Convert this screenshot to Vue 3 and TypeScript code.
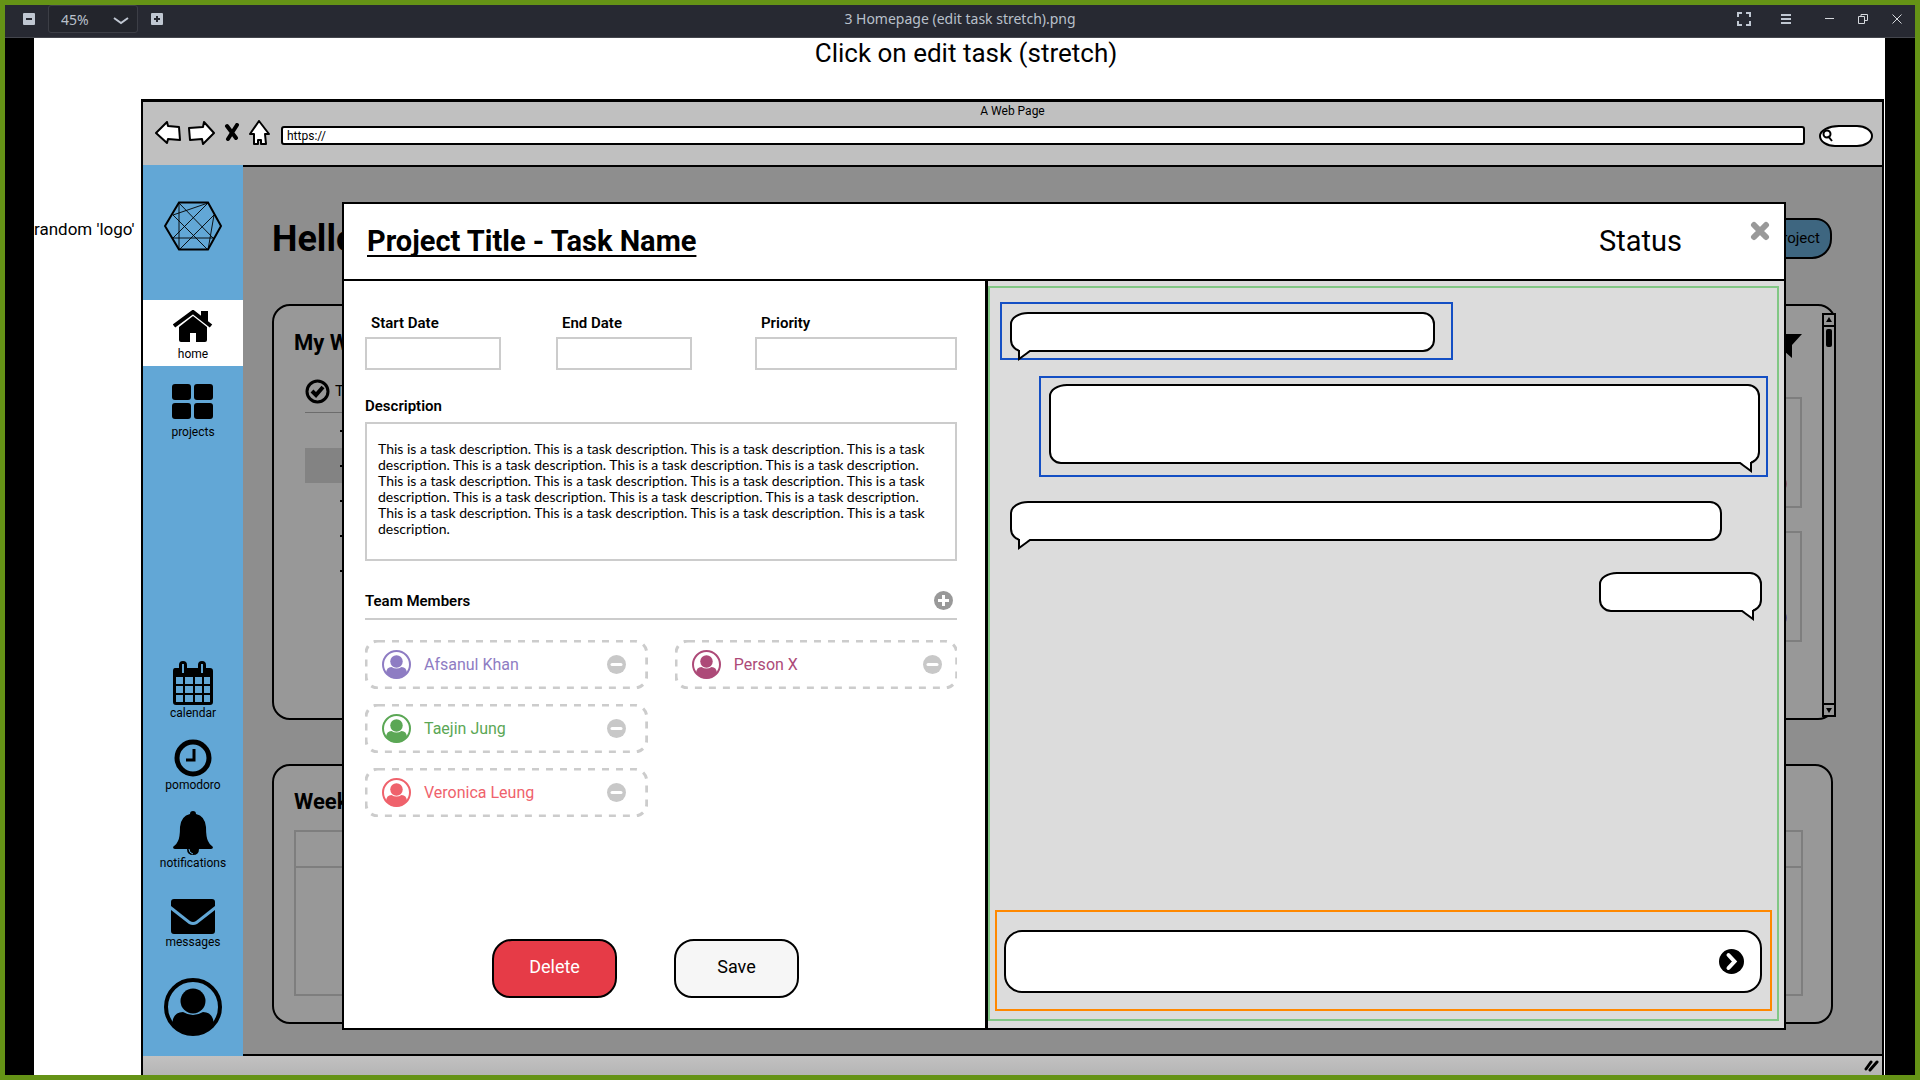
<script setup lang="ts">
import { ref } from 'vue'

interface Member {
  name: string
  color: string
}

interface Message {
  side: 'left' | 'right'
  size: 'medium' | 'large' | 'wide' | 'small'
  outlined: boolean
}

const sentence = 'This is a task description.'
const description = ref(Array(18).fill(sentence).join(' '))
const address = ref('https://')
const draft = ref('')
const search = ref('')
const zoomLevel = ref('45%')

const memberColumns: Member[][] = [
  [
    { name: 'Afsanul Khan', color: '#8e7cc3' },
    { name: 'Taejin Jung', color: '#5ba755' },
    { name: 'Veronica Leung', color: '#ef626c' },
  ],
  [{ name: 'Person X', color: '#ad4a78' }],
]

const messages: Message[] = [
  { side: 'left', size: 'medium', outlined: true },
  { side: 'right', size: 'large', outlined: true },
  { side: 'left', size: 'wide', outlined: false },
  { side: 'right', size: 'small', outlined: false },
]
</script>

<template>
  <div class="viewer">
    <header class="titlebar">
      <div class="zoom">
        <button type="button" class="tool" aria-label="Zoom out">
          <svg width="12" height="12" viewBox="0 0 12 12"><rect width="12" height="12" rx="1" fill="#c0c7d2" /><path d="M3 6h6" stroke="#272932" stroke-width="2" /></svg>
        </button>
        <div class="zoom-select">
          <select v-model="zoomLevel" aria-label="Zoom level"><option>45%</option></select>
          <svg class="chevron" width="16" height="8" viewBox="0 0 16 8" fill="none" stroke="#c0c7d2" stroke-width="2"><path d="M1 1l7 5 7-5" /></svg>
        </div>
        <button type="button" class="tool" aria-label="Zoom in">
          <svg width="12" height="12" viewBox="0 0 12 12"><rect width="12" height="12" rx="1" fill="#c0c7d2" /><path d="M3 6h6M6 3v6" stroke="#272932" stroke-width="2" /></svg>
        </button>
      </div>
      <span class="filename">3 Homepage (edit task stretch).png</span>
      <div class="window-tools">
        <button type="button" class="tool full" aria-label="Fullscreen">
          <svg width="14" height="14" viewBox="0 0 14 14" fill="none" stroke="#c0c7d2" stroke-width="2"><path d="M5 1H1v4M9 1h4v4M1 9v4h4M13 9v4H9" /></svg>
        </button>
        <button type="button" class="tool menu" aria-label="Menu">
          <svg width="10" height="10" viewBox="0 0 10 10" stroke="#c0c7d2" stroke-width="2"><path d="M0 1h10M0 5h10M0 9h10" /></svg>
        </button>
        <button type="button" class="tool" aria-label="Minimize">
          <svg width="9" height="10" viewBox="0 0 9 10" stroke="#d5d8dd"><path d="M0 4.5h9" /></svg>
        </button>
        <button type="button" class="tool" aria-label="Restore">
          <svg width="10" height="10" viewBox="0 0 10 10" fill="none" stroke="#d5d8dd"><path d="M.5 2.500h6v7h-6zM3 2.500V.5h6.500v6H7" /></svg>
        </button>
        <button type="button" class="tool" aria-label="Close">
          <svg width="10" height="10" viewBox="0 0 10 10" stroke="#d5d8dd"><path d="M.5.5l9 9M9.500.5l-9 9" /></svg>
        </button>
      </div>
    </header>

    <div class="stage">
      <div class="canvas">
        <h1 class="caption">Click on edit task (stretch)</h1>
        <div class="board">
          <p class="note">random 'logo'</p>

          <div class="browser">
            <div class="chrome">
              <div class="page-title">A Web Page</div>
              <div class="toolbar">
                <button type="button" class="nav-btn" aria-label="Back">
                  <svg width="26" height="24" viewBox="0 0 26 24" fill="#fff" stroke="#000" stroke-width="2" stroke-linejoin="round"><path d="M1 12L12 1l1 4 11 1 1 13-12-1-1 4z" /></svg>
                </button>
                <button type="button" class="nav-btn" aria-label="Forward">
                  <svg width="27" height="24" viewBox="0 0 27 24" fill="#fff" stroke="#000" stroke-width="2" stroke-linejoin="round"><path d="M26 12L16 1l-1 5-14 1 1 12 12-1 1 5z" /></svg>
                </button>
                <button type="button" class="nav-btn stop" aria-label="Stop">
                  <svg width="16" height="20" viewBox="0 0 16 20" stroke="#000" stroke-width="4" stroke-linecap="round"><path d="M3 3l9 12M13 2L4 16" /></svg>
                </button>
                <button type="button" class="nav-btn" aria-label="Home">
                  <svg width="21" height="25" viewBox="0 0 21 25" fill="#fff" stroke="#000" stroke-width="2" stroke-linejoin="round"><path d="M10 1L1 14h4v10h4v-4h3v4h5l-1-10h4z" /></svg>
                </button>
                <input v-model="address" class="url" type="text" aria-label="Address">
                <div class="search">
                  <svg width="11" height="13" viewBox="0 0 11 13" fill="none" stroke="#000" stroke-width="2"><circle cx="5" cy="5" r="3.500" /><path d="M6 7l4 5" /></svg>
                  <input v-model="search" type="text" aria-label="Search">
                </div>
              </div>
            </div>

            <div class="page">
              <nav class="sidebar">
                <a href="#" class="logo" aria-label="Logo">
                  <svg width="58" height="50" viewBox="0 0 58 50" fill="none" stroke="#000">
                    <path d="M15 1.500h29L57 25 44 48.500H15L1 25z" stroke-width="2" />
                    <path d="M15 1v48M15 2l35 36M44 2L9 14M44 2L9 37M9 14l35 35M50 14L15 49M50 14l-6 35M9 37h41" stroke-width=".9" />
                  </svg>
                </a>
                <a href="#" class="item active">
                  <svg width="40" height="32" viewBox="0 0 40 32"><path d="M1 16L20 2l18 14" fill="none" stroke="#000" stroke-width="4" /><path d="M28 1h7v11l-7-5zM6 17L20 6l14 11v13q0 2-2 2h-9v-9h-6v9H8q-2 0-2-2z" /></svg>
                  <span>home</span>
                </a>
                <a href="#" class="item projects">
                  <svg width="42" height="36" viewBox="0 0 42 36"><rect width="19" height="16" rx="3" /><rect x="22" width="19" height="16" rx="3" /><rect y="19" width="19" height="16" rx="3" /><rect x="22" y="19" width="19" height="16" rx="3" /></svg>
                  <span>projects</span>
                </a>
                <div class="spacer" />
                <a href="#" class="item">
                  <svg width="42" height="44" viewBox="0 0 42 44">
                    <path d="M3 7h4V4q0-4 4-4t4 4v3h11V4q0-4 4-4t4 4v3h4q3 0 3 3v31q0 3-3 3H4q-3 0-3-3V10q0-3 2-3z" />
                    <path d="M10 3h2v9h-2zM29 3h2v9h-2zM4 16h7v7H4zM13 16h8v7h-8zM23 16h7v7h-7zM32 16h6v7h-6zM4 25h7v7H4zM13 25h8v7h-8zM23 25h7v7h-7zM32 25h6v7h-6zM4 34h7v7H4zM13 34h8v7h-8zM23 34h7v7h-7zM32 34h6v7h-6z" fill="#62a7d6" />
                  </svg>
                  <span>calendar</span>
                </a>
                <a href="#" class="item">
                  <svg width="38" height="38" viewBox="0 0 38 38" fill="none" stroke="#000"><circle cx="19" cy="19" r="16" stroke-width="5" /><path d="M20 10v11h-8" stroke-width="3" /></svg>
                  <span>pomodoro</span>
                </a>
                <a href="#" class="item">
                  <svg width="42" height="44" viewBox="0 0 42 44"><path d="M21 0q3 0 3 3 9 2 10 13 0 10 2 14 1 3 5 6 0 2-2 2H27q0 6-6 6t-6-6H3q-2 0-2-2 4-3 5-6 2-4 2-14Q9 5 18 3q0-3 3-3z" /><path d="M17 38q0 4 4 5" fill="none" stroke="#62a7d6" /></svg>
                  <span>notifications</span>
                </a>
                <a href="#" class="item loose">
                  <svg width="44" height="35" viewBox="0 0 44 35"><path d="M3 0h38q3 0 3 3v4L25 22q-3 2-6 0L0 7V3q0-3 3-3z" /><path d="M0 11l18 14q4 2 8 0l18-14v21q0 3-3 3H3q-3 0-3-3z" /></svg>
                  <span>messages</span>
                </a>
                <a href="#" class="item loose" aria-label="Profile">
                  <svg width="58" height="58" viewBox="0 0 58 58"><circle cx="29" cy="29" r="27" fill="none" stroke="#000" stroke-width="4" /><ellipse cx="29" cy="23" rx="12.500" ry="12.500" /><path d="M8 46q1-12 11-12 10 6 20 0 10 0 11 12-9 11-21 11T8 46z" /></svg>
                </a>
              </nav>

              <main class="content">
                <div class="greeting">
                  <h2>Hello</h2>
                  <button type="button">Project</button>
                </div>

                <section class="card work">
                  <div class="todo">
                    <h3>My Work</h3>
                    <div class="todo-head">
                      <svg width="25" height="25" viewBox="0 0 25 25" fill="none" stroke="#000"><circle cx="12.500" cy="12.500" r="10.500" stroke-width="3" /><path d="M7 12l4 4 7-8" stroke-width="4" /></svg>
                      <span>Task</span>
                    </div>
                    <div v-for="n in 5" :key="n" class="todo-row" :class="{ picked: n === 2 }"><i /></div>
                  </div>
                  <div class="feed">
                    <svg class="filter" width="30" height="24" viewBox="0 0 30 24"><path d="M0 0h30L20 11v13l-8-7v-6z" /></svg>
                    <div class="feed-box pink"><i /></div>
                    <div class="feed-box violet"><i /></div>
                  </div>
                  <div class="scrollbar">
                    <svg width="10" height="10" viewBox="0 0 10 10"><path d="M5 2l3 5H2z" /></svg>
                    <div class="track"><i /></div>
                    <svg width="10" height="10" viewBox="0 0 10 10"><path d="M2 3h6L5 8z" /></svg>
                  </div>
                </section>

                <section class="card week">
                  <h3>Week</h3>
                  <div class="week-grid"><div /></div>
                </section>

                <div class="modal" role="dialog" aria-labelledby="task-title">
                  <header class="modal-head">
                    <h2 id="task-title">Project Title - Task Name</h2>
                    <span class="status">Status</span>
                    <button type="button" class="close" aria-label="Close dialog">
                      <svg width="20" height="20" viewBox="0 0 20 20" stroke="#999" stroke-width="6" stroke-linecap="round"><path d="M4 4l12 12M16 4L4 16" /></svg>
                    </button>
                  </header>

                  <div class="modal-body">
                    <form class="details" @submit.prevent>
                      <div class="fields">
                        <div class="field"><label for="start">Start Date</label><input id="start" type="text"></div>
                        <div class="field"><label for="end">End Date</label><input id="end" type="text"></div>
                        <div class="field priority"><label for="priority">Priority</label><input id="priority" type="text"></div>
                      </div>

                      <label class="heading" for="description">Description</label>
                      <textarea id="description" v-model="description" />

                      <div class="team-head">
                        <h3>Team Members</h3>
                        <button type="button" aria-label="Add member">
                          <svg width="19" height="19" viewBox="0 0 19 19"><circle cx="9.500" cy="9.500" r="9.500" fill="#999" /><path d="M4 9.500h11M9.500 4v11" stroke="#fff" stroke-width="3" /></svg>
                        </button>
                      </div>

                      <div class="members">
                        <ul v-for="(column, c) in memberColumns" :key="c">
                          <li v-for="member in column" :key="member.name" :style="{ color: member.color }">
                            <svg class="dashes"><rect rx="12" /></svg>
                            <svg width="29" height="29" viewBox="0 0 58 58" fill="currentColor"><circle cx="29" cy="29" r="27" fill="none" stroke="currentColor" stroke-width="4" /><circle cx="29" cy="23" r="12.500" /><path d="M8 46q1-12 11-12 10 6 20 0 10 0 11 12-9 11-21 11T8 46z" /></svg>
                            <span>{{ member.name }}</span>
                            <button type="button" :aria-label="'Remove ' + member.name">
                              <svg width="19" height="19" viewBox="0 0 19 19"><circle cx="9.500" cy="9.500" r="9.500" fill="#c8c8c8" /><path d="M5 9.500h9" stroke="#fff" stroke-width="3" stroke-linecap="round" /></svg>
                            </button>
                          </li>
                        </ul>
                      </div>

                      <div class="actions">
                        <button type="button" class="delete">Delete</button>
                        <button type="submit">Save</button>
                      </div>
                    </form>

                    <div class="chat-pane">
                      <div class="chat">
                        <div class="messages">
                          <div v-for="(m, i) in messages" :key="i" class="message" :class="[m.side, m.size, { outlined: m.outlined }]">
                            <div class="bubble">
                              <svg class="tail" width="16" height="12" viewBox="0 0 16 12"><path d="M2 0L3 9 14 0z" fill="#fff" /><path d="M2 1v9L13 2" fill="none" stroke="#000" stroke-width="2" /></svg>
                            </div>
                          </div>
                        </div>
                        <form class="composer" @submit.prevent>
                          <div class="compose-box">
                            <input v-model="draft" type="text" aria-label="Message">
                            <button type="submit" aria-label="Send">
                              <svg width="25" height="25" viewBox="0 0 25 25"><circle cx="12.500" cy="12.500" r="12.500" /><path d="M9.500 6l6 6.500-6 6.500" fill="none" stroke="#fff" stroke-width="4" stroke-linecap="round" /></svg>
                            </button>
                          </div>
                        </form>
                      </div>
                    </div>
                  </div>
                </div>
              </main>
            </div>

            <footer class="statusbar">
              <svg width="15" height="12" viewBox="0 0 15 12" stroke="#000" stroke-width="3" stroke-linecap="round"><path d="M2 9l5-7M6 10l7-8" /></svg>
            </footer>
          </div>
        </div>
      </div>
    </div>
  </div>
</template>

<style>
html,
body {
  margin: 0;
}
</style>

<style scoped>
* {
  box-sizing: border-box;
}

.viewer {
  display: flex;
  flex-direction: column;
  min-height: 100vh;
  border: 5px solid #659316;
  font-family: Roboto, "Liberation Sans", sans-serif;
  color: #000;
}

h1, h2, h3, p, ul {
  margin: 0;
  padding: 0;
}

button {
  padding: 0;
  border: 0;
  background: none;
  font: inherit;
  color: inherit;
}

svg {
  display: block;
  flex: none;
}

input, textarea, select {
  border: 0;
  outline: 0;
  background: none;
  font: inherit;
  color: inherit;
}

a {
  color: inherit;
  text-decoration: none;
}

/* viewer title bar */
.titlebar {
  display: grid;
  grid-template-columns: 1fr auto 1fr;
  height: 33px;
  border-bottom: 1px solid #44464d;
  background: #272932;
  color: #b9c0cb;
  font-family: "Noto Sans", "Open Sans", sans-serif;
  font-size: 14px;
}

.zoom {
  display: flex;
  align-items: center;
  gap: 13px;
  padding-left: 18px;
  padding-bottom: 4px;
}

.zoom-select {
  position: relative;
  width: 90px;
  height: 28px;
  border: 1px solid #3c3e46;
  border-radius: 3px;
  background: #23252c;
}

.zoom-select select {
  width: 100%;
  height: 100%;
  padding: 0 0 0 12px;
  appearance: none;
}

.chevron {
  position: absolute;
  top: 11px;
  right: 8px;
}

.filename {
  align-self: start;
  line-height: 28px;
}

.window-tools {
  display: flex;
  align-items: center;
  justify-content: flex-end;
  gap: 24px;
  padding-right: 13px;
  padding-bottom: 5px;
}

.window-tools .full {
  margin-right: 6px;
}

.window-tools .menu {
  margin-right: 10px;
}

/* picture on the black stage */
.stage {
  display: flex;
  flex: 1;
  padding: 0 30px 0 29px;
  background: #000;
}

.canvas {
  display: flex;
  flex: 1;
  flex-direction: column;
  padding-right: 1px;
  background: #fff;
}

.caption {
  margin-bottom: 31px;
  padding-left: 14px;
  font-size: 26px;
  font-weight: 400;
  line-height: 30px;
  text-align: center;
}

.board {
  display: flex;
  flex: 1;
}

.note {
  width: 107px;
  padding-top: 120px;
  font-size: 17px;
  line-height: 20px;
  white-space: nowrap;
}

.browser {
  display: flex;
  flex: 1;
  flex-direction: column;
  border: solid #000;
  border-width: 3px 2px 0;
}

.chrome {
  height: 63px;
  background: #c0c0c0;
}

.page-title {
  font-size: 12px;
  line-height: 18px;
  text-align: center;
}

.toolbar {
  display: flex;
  align-items: center;
  height: 25px;
  gap: 7px;
  padding: 0 9px 0 12px;
}

.stop {
  margin: 0 2px;
}

.url {
  flex: 1;
  min-width: 0;
  height: 19px;
  margin: 6px 7px 0 4px;
  padding: 0 0 0 4px;
  border: 2px solid #000;
  border-radius: 3px;
  background: #fff;
  font-size: 12px;
}

.search {
  display: flex;
  align-items: center;
  width: 54px;
  height: 22px;
  margin-top: 6px;
  padding-left: 1px;
  border: 2px solid #000;
  border-radius: 20px 16px 16px 16px / 11px;
  background: #fff;
}

.search input {
  width: 30px;
  padding: 0;
}

.page {
  display: flex;
  flex: 1;
}

/* sidebar */
.sidebar {
  display: flex;
  flex-direction: column;
  width: 100px;
  padding-bottom: 20px;
  background: #62a7d6;
}

.logo {
  display: flex;
  align-items: center;
  justify-content: center;
  height: 135px;
  padding-bottom: 13px;
}

.item {
  display: flex;
  flex-direction: column;
  align-items: center;
  margin-top: 18px;
  font-size: 12px;
  line-height: 16px;
}

.item.active {
  height: 66px;
  margin-top: 0;
  padding-top: 10px;
  gap: 4px;
  background: #fff;
}

.item.projects {
  gap: 4px;
}

.item.loose {
  margin-top: 28px;
}

.spacer {
  flex: 1;
}

/* dimmed page behind the dialog */
.content {
  position: relative;
  display: flex;
  flex: 1;
  flex-direction: column;
  padding: 51px 46px 30px 29px;
  border: solid #000;
  border-width: 2px 0;
  background: #8e8e8e;
}

.greeting {
  display: flex;
  align-items: center;
  justify-content: space-between;
  height: 41px;
  margin: 0 4px 45px 0;
}

.greeting h2 {
  font-size: 36px;
  line-height: 40px;
}

.greeting button {
  width: 150px;
  height: 41px;
  padding: 0 10px 2px 0;
  border: 2px solid #000;
  border-radius: 20px 16px;
  background: #3e6680;
  font-size: 15px;
  text-align: right;
}

.card {
  border: 2px solid #000;
  border-radius: 18px;
  background: #989898;
}

.card h3 {
  font-size: 22px;
  line-height: 28px;
}

.work {
  display: flex;
  flex: 411 1 0;
  margin-bottom: 44px;
}

.todo {
  width: 40%;
  padding: 23px 0 0 31px;
}

.todo h3 {
  margin-left: -11px;
}

.todo-head {
  display: flex;
  align-items: flex-end;
  gap: 5px;
  height: 56px;
  padding-bottom: 8px;
  border-bottom: 1px solid #6c6c6c;
  font-size: 15px;
  line-height: 25px;
}

.todo-row {
  display: flex;
  align-items: center;
  height: 35px;
  padding-left: 35px;
}

.todo-row i {
  width: 10px;
  height: 2px;
  background: #000;
}

.picked {
  background: #838383;
}

.feed {
  flex: 1;
  padding: 28px 20px 0 0;
}

.filter {
  margin-left: auto;
}

.feed-box {
  display: flex;
  align-items: flex-end;
  justify-content: flex-end;
  height: 111px;
  margin-top: 23px;
  padding: 13px;
  border: 2px solid #7e7e7e;
}

.filter + .feed-box {
  margin-top: 39px;
}

.feed-box i {
  width: 18px;
  height: 18px;
  border-radius: 9px;
}

.pink i {
  background: #875b6c;
}

.violet i {
  background: #5f5c8c;
}

.scrollbar {
  display: flex;
  flex-direction: column;
  width: 14px;
  margin: 7px -2px 1px 0;
  border: 2px solid #000;
  background: #989898;
}

.track {
  flex: 1;
  border: solid #000;
  border-width: 2px 0;
}

.track i {
  display: block;
  width: 6px;
  height: 18px;
  margin: 2px auto;
  border-radius: 2px;
  background: #000;
}

.week {
  display: flex;
  flex: 208 1 0;
  flex-direction: column;
  margin-right: 3px;
  padding: 22px 28px 26px 20px;
}

.week-grid {
  flex: 1;
  margin-top: 14px;
  border: 2px solid #7e7e7e;
}

.week-grid div {
  height: 36px;
  border-bottom: 2px solid #7e7e7e;
}

/* task dialog */
.modal {
  position: absolute;
  top: 35px;
  right: 96px;
  bottom: 24px;
  left: 99px;
  display: flex;
  flex-direction: column;
  border: 2px solid #000;
  background: #fff;
}

.modal-head {
  display: flex;
  align-items: center;
  height: 77px;
  padding: 0 14px 2px 23px;
  border-bottom: 2px solid #000;
}

.modal-head h2 {
  margin-right: auto;
  font-size: 29px;
  line-height: 34px;
  text-decoration: underline;
  text-decoration-thickness: 2px;
  text-decoration-skip-ink: none;
  text-underline-offset: 4px;
}

.status {
  font-size: 29px;
  line-height: 34px;
}

.close {
  align-self: flex-start;
  margin: 17px 0 0 68px;
}

.modal-body {
  display: grid;
  flex: 1;
  grid-template-columns: 641fr 798fr;
}

.details {
  display: flex;
  flex-direction: column;
  padding: 32px 28px 30px 21px;
  font-size: 15px;
  line-height: 20px;
}

.details label,
.details h3 {
  font-size: 15px;
  font-weight: 600;
}

.fields {
  display: grid;
  grid-template-columns: 191px 199px 1fr;
}

.field {
  display: flex;
  flex-direction: column;
  gap: 4px;
}

.field label {
  padding-left: 6px;
}

.field input {
  width: 136px;
  height: 33px;
  border: 2px solid #ccc;
}

.priority input {
  width: 100%;
}

.heading {
  margin: 26px 0 6px;
}

textarea {
  height: 139px;
  padding: 17px 11px;
  border: 2px solid #ccc;
  font-family: Lato, sans-serif;
  font-size: 14px;
  line-height: 16px;
  resize: none;
  overflow: hidden;
}

.team-head {
  display: flex;
  align-items: center;
  justify-content: space-between;
  height: 37px;
  margin: 22px 0 20px;
  padding-right: 4px;
  border-bottom: 2px solid #ccc;
}

.members {
  display: grid;
  grid-template-columns: 1fr 1fr;
  gap: 27px;
}

.members ul {
  display: flex;
  flex-direction: column;
  gap: 15px;
  list-style: none;
}

.members li {
  position: relative;
  display: flex;
  align-items: center;
  gap: 13px;
  height: 49px;
  padding: 0 22px 0 17px;
  font-size: 16px;
}

.members ul:last-child li {
  padding-right: 15px;
}

.members li span {
  flex: 1;
}

.dashes {
  position: absolute;
  inset: 0;
  width: 100%;
  height: 100%;
}

.dashes rect {
  x: 1px;
  y: 1px;
  width: calc(100% - 2px);
  height: calc(100% - 2px);
  fill: none;
  stroke: #ccc;
  stroke-width: 3px;
  stroke-dasharray: 7px;
}

.actions {
  display: flex;
  gap: 57px;
  margin-top: auto;
  margin-left: 127px;
}

.actions button {
  width: 125px;
  height: 59px;
  padding-bottom: 3px;
  border: 2px solid #000;
  border-radius: 20px 18px;
  background: #f6f6f6;
  font-size: 18px;
}

.actions .delete {
  background: #e63b47;
  color: #fff;
}

.chat-pane {
  display: flex;
  border-left: 3px solid #000;
  padding: 5px 5px 7px 0;
  background: #dcdcdc;
}

.chat {
  display: flex;
  flex: 1;
  flex-direction: column;
  border: 2px solid #82c785;
}

.messages {
  display: flex;
  flex-direction: column;
  padding: 14px 9px 0 10px;
}

.message {
  margin-bottom: 31px;
}

.outlined {
  margin-bottom: 16px;
  padding: 8px 16px 6px 8px;
  border: 2px solid #144fc4;
}

.medium {
  width: 59%;
}

.large {
  width: 95%;
  margin-bottom: 24px;
  padding: 6px 6px 11px 8px;
}

.wide {
  width: 94%;
  padding-left: 10px;
}

.small {
  width: 22%;
  padding-right: 6px;
}

.right {
  align-self: flex-end;
}

.bubble {
  position: relative;
  height: 40px;
  border: 2px solid #000;
  border-radius: 18px 12px 12px 12px / 12px;
  background: #fff;
}

.large .bubble {
  height: 80px;
}

.tail {
  position: absolute;
  bottom: -11px;
  left: 5px;
}

.right .tail {
  right: 5px;
  left: auto;
  transform: scaleX(-1);
}

.composer {
  margin: auto 5px 8px;
  padding: 18px 8px 16px 7px;
  border: 2px solid #f80;
}

.compose-box {
  display: flex;
  align-items: center;
  height: 63px;
  padding: 0 16px 0 20px;
  border: 2px solid #000;
  border-radius: 18px;
  background: #fff;
}

.compose-box input {
  flex: 1;
  min-width: 0;
}

.statusbar {
  display: flex;
  align-items: center;
  justify-content: flex-end;
  height: 19px;
  padding-right: 3px;
  background: linear-gradient(#c2c1c1, #b5b5b5);
}
</style>
